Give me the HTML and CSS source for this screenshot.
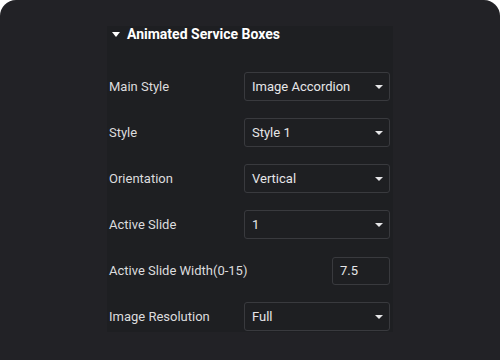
FILE: index.html
```html
<!DOCTYPE html>
<html lang="en">
<head>
    <meta charset="UTF-8">
    <meta name="viewport" content="width=device-width, initial-scale=1.0">
    <title>Animated Service Boxes</title>
    <link rel="stylesheet" href="styles.css">
</head>
<body>
    <div class="card">
        <div class="panel">
            <div class="section-title">
                <span class="caret-down"></span>
                Animated Service Boxes
            </div>
            <div class="controls">
                <div class="row">
                    <span class="label">Main Style</span>
                    <div class="select">Image Accordion <span class="caret"></span></div>
                </div>
                <div class="row">
                    <span class="label">Style</span>
                    <div class="select">Style 1 <span class="caret"></span></div>
                </div>
                <div class="row">
                    <span class="label">Orientation</span>
                    <div class="select">Vertical <span class="caret"></span></div>
                </div>
                <div class="row">
                    <span class="label">Active Slide</span>
                    <div class="select">1 <span class="caret"></span></div>
                </div>
                <div class="row">
                    <span class="label">Active Slide Width(0-15)</span>
                    <div class="number">7.5</div>
                </div>
                <div class="row">
                    <span class="label">Image Resolution</span>
                    <div class="select">Full <span class="caret"></span></div>
                </div>
            </div>
        </div>
    </div>
</body>
</html>
```

FILE: styles.css
```css
body {
    margin: 0;
    background-color: #ffffff;
    font-family: Roboto, "Liberation Sans", sans-serif;
}
.card {
    width: 500px;
    height: 360px;
    background-color: #222226;
    border-radius: 16px 16px 0 0;
    padding: 26px 0 0 107px;
    box-sizing: border-box;
}
.panel {
    width: 286px;
    height: 306px;
    background-color: #1e1f22;
    padding: 0 3px 0 2px;
    box-sizing: border-box;
}
.section-title {
    display: flex;
    align-items: center;
    gap: 7px;
    padding-left: 3px;
    height: 16px;
    font-size: 14px;
    font-weight: bold;
    line-height: 16px;
    color: #ffffff;
}
.caret-down {
    width: 0;
    height: 0;
    border-left: 4px solid transparent;
    border-right: 4px solid transparent;
    border-top: 5px solid #ffffff;
}
.controls {
    display: flex;
    flex-direction: column;
    gap: 17px;
    margin-top: 30px;
}
.row {
    display: flex;
    justify-content: space-between;
    align-items: center;
    height: 29px;
}
.label {
    font-size: 13px;
    color: #dcdcde;
}
.select, .number {
    display: flex;
    align-items: center;
    justify-content: space-between;
    height: 29px;
    border: 1px solid #393a3e;
    border-radius: 3px;
    padding: 0 6px 0 7px;
    box-sizing: border-box;
    font-size: 13px;
    color: #e6e6e8;
}
.select {
    width: 146px;
}
.number {
    width: 58px;
    height: 28px;
}
.caret {
    width: 0;
    height: 0;
    border-left: 4px solid transparent;
    border-right: 4px solid transparent;
    border-top: 4px solid #e6e6e8;
}
```
